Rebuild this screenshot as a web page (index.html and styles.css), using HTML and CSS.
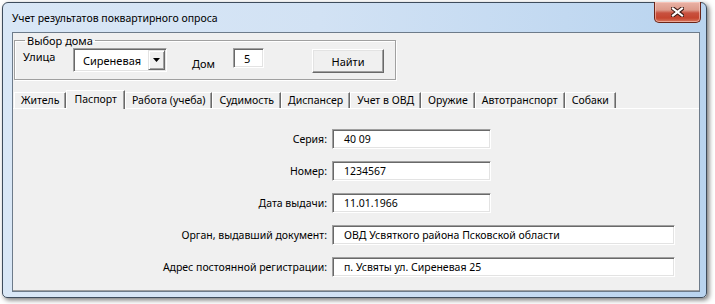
FILE: index.html
```html
<!DOCTYPE html>
<html lang="ru">
<head>
<meta charset="utf-8">
<title>Учет результатов поквартирного опроса</title>
<link rel="stylesheet" href="styles.css">
</head>
<body>
<div class="window">
  <div class="titlebar">
    <span class="title">Учет результатов поквартирного опроса</span>
    <div class="close">
      <svg width="13" height="10" viewBox="0 0 13 10">
        <path d="M2 1.5 L11 8.5 M11 1.5 L2 8.5" stroke="#3a1812" stroke-width="4.2" stroke-linecap="square" fill="none"/>
        <path d="M2 1.5 L11 8.5 M11 1.5 L2 8.5" stroke="#ffffff" stroke-width="2.2" stroke-linecap="square" fill="none"/>
      </svg>
    </div>
  </div>
  <div class="client">
    <fieldset class="group">
      <legend>Выбор дома</legend>
      <span class="lbl lbl-street">Улица</span>
      <div class="combo">
        <span class="combo-text">Сиреневая</span>
        <span class="combo-btn"><svg width="7" height="4" viewBox="0 0 7 4"><path d="M0 0 H7 L3.5 4 Z" fill="#000"/></svg></span>
      </div>
      <span class="lbl lbl-house">Дом</span>
      <div class="field field-house">5</div>
      <div class="button">Найти</div>
    </fieldset>

    <div class="tabs">
      <div class="tab">Житель</div>
      <div class="tab active">Паспорт</div>
      <div class="tab">Работа (учеба)</div>
      <div class="tab">Судимость</div>
      <div class="tab">Диспансер</div>
      <div class="tab">Учет в ОВД</div>
      <div class="tab">Оружие</div>
      <div class="tab">Автотранспорт</div>
      <div class="tab">Собаки</div>
    </div>

    <div class="panel">
      <div class="form">
        <label class="flabel">Серия:</label>
        <div class="field short">40 09</div>
        <label class="flabel">Номер:</label>
        <div class="field short">1234567</div>
        <label class="flabel">Дата выдачи:</label>
        <div class="field short">11.01.1966</div>
        <label class="flabel">Орган, выдавший документ:</label>
        <div class="field long">ОВД Усвяткого района Псковской области</div>
        <label class="flabel">Адрес постоянной регистрации:</label>
        <div class="field long">п. Усвяты ул. Сиреневая 25</div>
      </div>
    </div>
  </div>
</div>
</body>
</html>
```

FILE: styles.css
```css
* { box-sizing: border-box; }

html, body {
  margin: 0;
  padding: 0;
  background: #ffffff;
}

body {
  font-family: "Noto Sans", "Open Sans", sans-serif;
  font-size: 10.5px;
  color: #000;
  width: 715px;
  height: 304px;
  overflow: hidden;
}

.window {
  margin: 2px 0 0 2px;
  width: 705px;
  height: 296px;
  border: 1px solid #3e4c5c;
  border-radius: 6px 6px 5px 5px;
  background: linear-gradient(90deg, #d9e7f6 0%, #d2e2f4 45%, #c2d9f1 80%, #b9d4ef 100%);
  box-shadow: 2px 2px 5px rgba(0, 0, 0, 0.55);
  display: flex;
  flex-direction: column;
}

.titlebar {
  height: 29px;
  display: flex;
  align-items: flex-start;
  padding-left: 9px;
}

.title {
  margin-top: 7px;
  line-height: 16px;
  font-size: 10.5px;
  color: #000;
}

.close {
  margin-left: auto;
  margin-right: 5px;
  margin-top: -1px;
  width: 47px;
  height: 21px;
  border: 1px solid #6a2418;
  border-top: none;
  border-radius: 0 0 5px 5px;
  background: linear-gradient(180deg, #eab3a6 0%, #dd9a8a 40%, #c8513f 55%, #c5452f 80%, #d8775e 100%);
  box-shadow: inset 0 0 0 1px rgba(255, 210, 200, 0.55);
  display: flex;
  align-items: center;
  justify-content: center;
}

.client {
  margin: 0 6px 0 9px;
  width: 688px;
  height: 260px;
  border: 1px solid #6d7b8a;
  background: #f0f0f0;
  display: flex;
  flex-direction: column;
}

/* group box */
.group {
  margin: 0 0 0 1px;
  width: 382px;
  height: 47px;
  border: 1px solid #a0a0a0;
  box-shadow: inset 1px 1px #fff, 1px 1px #fff;
  padding: 0 0 0 8px;
  display: flex;
  align-items: flex-start;
  min-width: 0;
}

.group legend {
  margin-left: 2px;
  padding: 0 2px;
  line-height: 15px;
  font-size: 11px;
}

.lbl {
  line-height: 15px;
  font-size: 11px;
}

.lbl-street {
  width: 50px;
  margin-top: 1px;
}

.combo {
  width: 94px;
  height: 24px;
  background: #fff;
  border: 1px solid;
  border-color: #a0a0a0 #fff #fff #a0a0a0;
  box-shadow: inset 1px 1px #696969, inset -1px -1px #e3e3e3;
  display: flex;
  align-items: center;
  padding: 2px 1px 2px 9px;
  font-size: 11px;
}

.combo-text {
  flex: 1;
  line-height: 15px;
}

.combo-btn {
  width: 17px;
  height: 20px;
  background: #f0f0f0;
  border: 1px solid;
  border-color: #e3e3e3 #696969 #696969 #e3e3e3;
  box-shadow: inset 1px 1px #fff, inset -1px -1px #a0a0a0;
  display: flex;
  align-items: center;
  justify-content: center;
}

.lbl-house {
  margin-left: 25px;
  margin-top: 8px;
  width: 41px;
}

.field {
  background: #fff;
  border: 1px solid;
  border-color: #a0a0a0 #fff #fff #a0a0a0;
  box-shadow: inset 1px 1px #696969, inset -1px -1px #e3e3e3;
  height: 20px;
  line-height: 17px;
  padding: 1px 0 0 11px;
  white-space: nowrap;
  overflow: hidden;
}

.field-house {
  width: 31px;
  height: 20px;
  padding-left: 10px;
  font-size: 11px;
}

.button {
  margin-left: 48px;
  margin-top: 1px;
  width: 72px;
  height: 24px;
  border: 1px solid;
  border-color: #fff #696969 #696969 #fff;
  box-shadow: inset -1px -1px #a0a0a0, inset 1px 1px #e3e3e3;
  background: #f0f0f0;
  display: flex;
  align-items: center;
  justify-content: center;
  padding-top: 1px;
  font-size: 11px;
}

/* tabs */
.tabs {
  margin-top: 10px;
  height: 19px;
  padding-left: 1px;
  display: flex;
  align-items: flex-end;
  border-bottom: 1px solid #fff;
}

.tab {
  height: 16px;
  padding: 0 6px;
  line-height: 15px;
  border-left: 1px solid #fff;
  border-top: 1px solid #fff;
  border-right: 1px solid #696969;
  box-shadow: inset -1px 0 #a0a0a0;
  background: #f0f0f0;
  white-space: nowrap;
}

.tab.active {
  height: 19px;
  margin-bottom: -1px;
  padding: 0 7px;
  line-height: 16px;
  position: relative;
  z-index: 1;
}

/* panel */
.panel {
  flex: 1;
  border-bottom: 1px solid #a0a0a0;
  padding-top: 20px;
}

.form {
  display: grid;
  grid-template-columns: 314px auto;
  column-gap: 5px;
  row-gap: 12px;
  align-items: center;
  justify-items: start;
}

.flabel {
  justify-self: end;
  line-height: 15px;
  padding-top: 1px;
}

.short { width: 159px; }
.long { width: 343px; }
```
